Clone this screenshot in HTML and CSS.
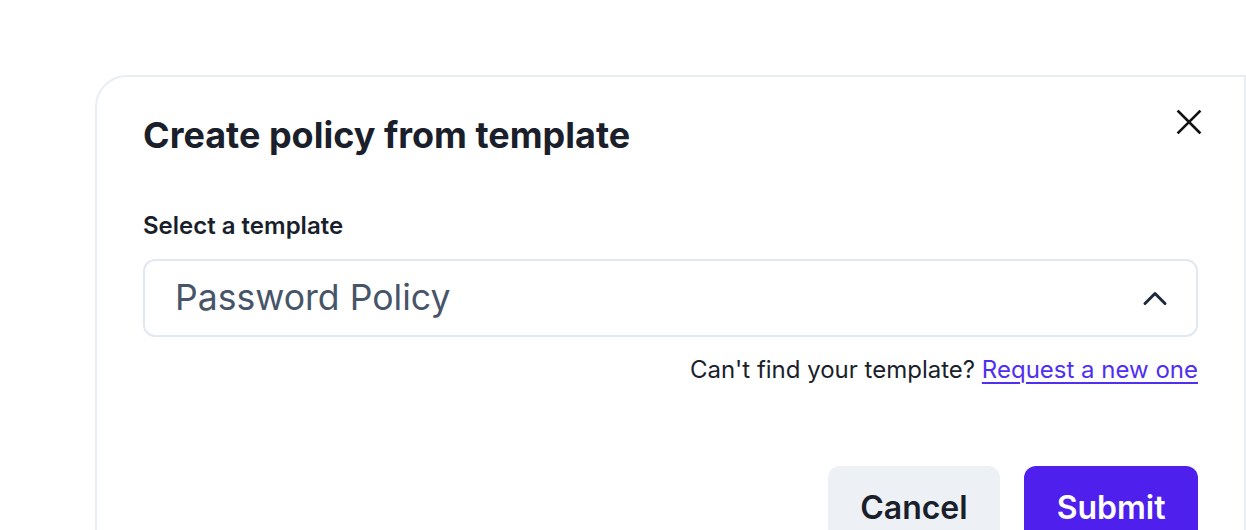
FILE: index.html
```html
<!DOCTYPE html>
<html lang="en">
<head>
<meta charset="utf-8">
<title>Create policy from template</title>
<link rel="stylesheet" href="styles.css">
</head>
<body>
<div class="modal">
  <div class="modal-header">
    <h1 class="modal-title">Create policy from template</h1>
    <button class="close-btn" aria-label="Close">
      <svg width="26" height="26" viewBox="0 0 26 26" fill="none" stroke="#111" stroke-width="2.6" stroke-linecap="square">
        <path d="M2.5 2.5 L23.5 23.5 M23.5 2.5 L2.5 23.5"/>
      </svg>
    </button>
  </div>
  <label class="field-label">Select a template</label>
  <div class="select">
    <span class="select-value">Password Policy</span>
    <svg class="chevron" width="28" height="28" viewBox="0 0 28 28" fill="none" stroke="#1e293b" stroke-width="3" stroke-linecap="round" stroke-linejoin="round">
      <path d="M4 19.5 L14 9.5 L24 19.5"/>
    </svg>
  </div>
  <p class="helper">Can't find your template? <a class="link" href="#">Request a new one</a></p>
  <div class="actions">
    <button class="btn btn-cancel">Cancel</button>
    <button class="btn btn-submit">Submit</button>
  </div>
</div>
</body>
</html>
```
FILE: styles.css
```css
* { box-sizing: border-box; }
html, body { margin: 0; padding: 0; background: #ffffff; }
body {
  font-family: Inter, "Noto Sans", "Liberation Sans", sans-serif;
  color: #1a1f2b;
  overflow: hidden;
  height: 530px;
}
.modal {
  margin: 75px 0 0 95px;
  width: 1151px;
  height: 600px;
  border: 2px solid #e9eef4;
  border-top-left-radius: 32px;
  padding: 36px 46px 0 46px;
  background: #fff;
}
.modal-header {
  display: flex;
  justify-content: space-between;
  align-items: flex-start;
}
.modal-title {
  margin: 0;
  font-size: 36px;
  line-height: 44px;
  font-weight: 700;
  color: #1a1f2b;
}
.close-btn {
  border: 0;
  background: none;
  padding: 0;
  margin: -4px -4px 0 0;
  width: 26px;
  height: 26px;
  cursor: pointer;
  display: flex;
}
.field-label {
  display: block;
  margin-top: 53px;
  font-size: 24px;
  line-height: 32px;
  font-weight: 600;
  color: #1a1f2b;
}
.select {
  margin-top: 17px;
  height: 78px;
  border: 2px solid #e2e8f0;
  border-radius: 12px;
  display: flex;
  align-items: center;
  justify-content: space-between;
  padding: 0 27px 0 30px;
}
.select-value {
  font-size: 35.6px;
  line-height: 44px;
  color: #475569;
}
.helper {
  margin: 17px 0 0 0;
  text-align: right;
  font-size: 24px;
  line-height: 32px;
  color: #1a1f2b;
}
.link {
  color: #4f2ff0;
  text-decoration: underline;
  text-underline-offset: 4px;
  text-decoration-thickness: 1.5px;
}
.actions {
  margin-top: 80px;
  display: flex;
  justify-content: flex-end;
  gap: 24px;
}
.btn {
  border: 0;
  border-radius: 12px;
  padding: 20px 32.5px;
  font-family: inherit;
  font-size: 32px;
  line-height: 44px;
  font-weight: 600;
  cursor: pointer;
}
.btn-cancel { background: #edf1f5; color: #1a1f2b; }
.btn-submit { background: #4f1fed; color: #ffffff; }
```
